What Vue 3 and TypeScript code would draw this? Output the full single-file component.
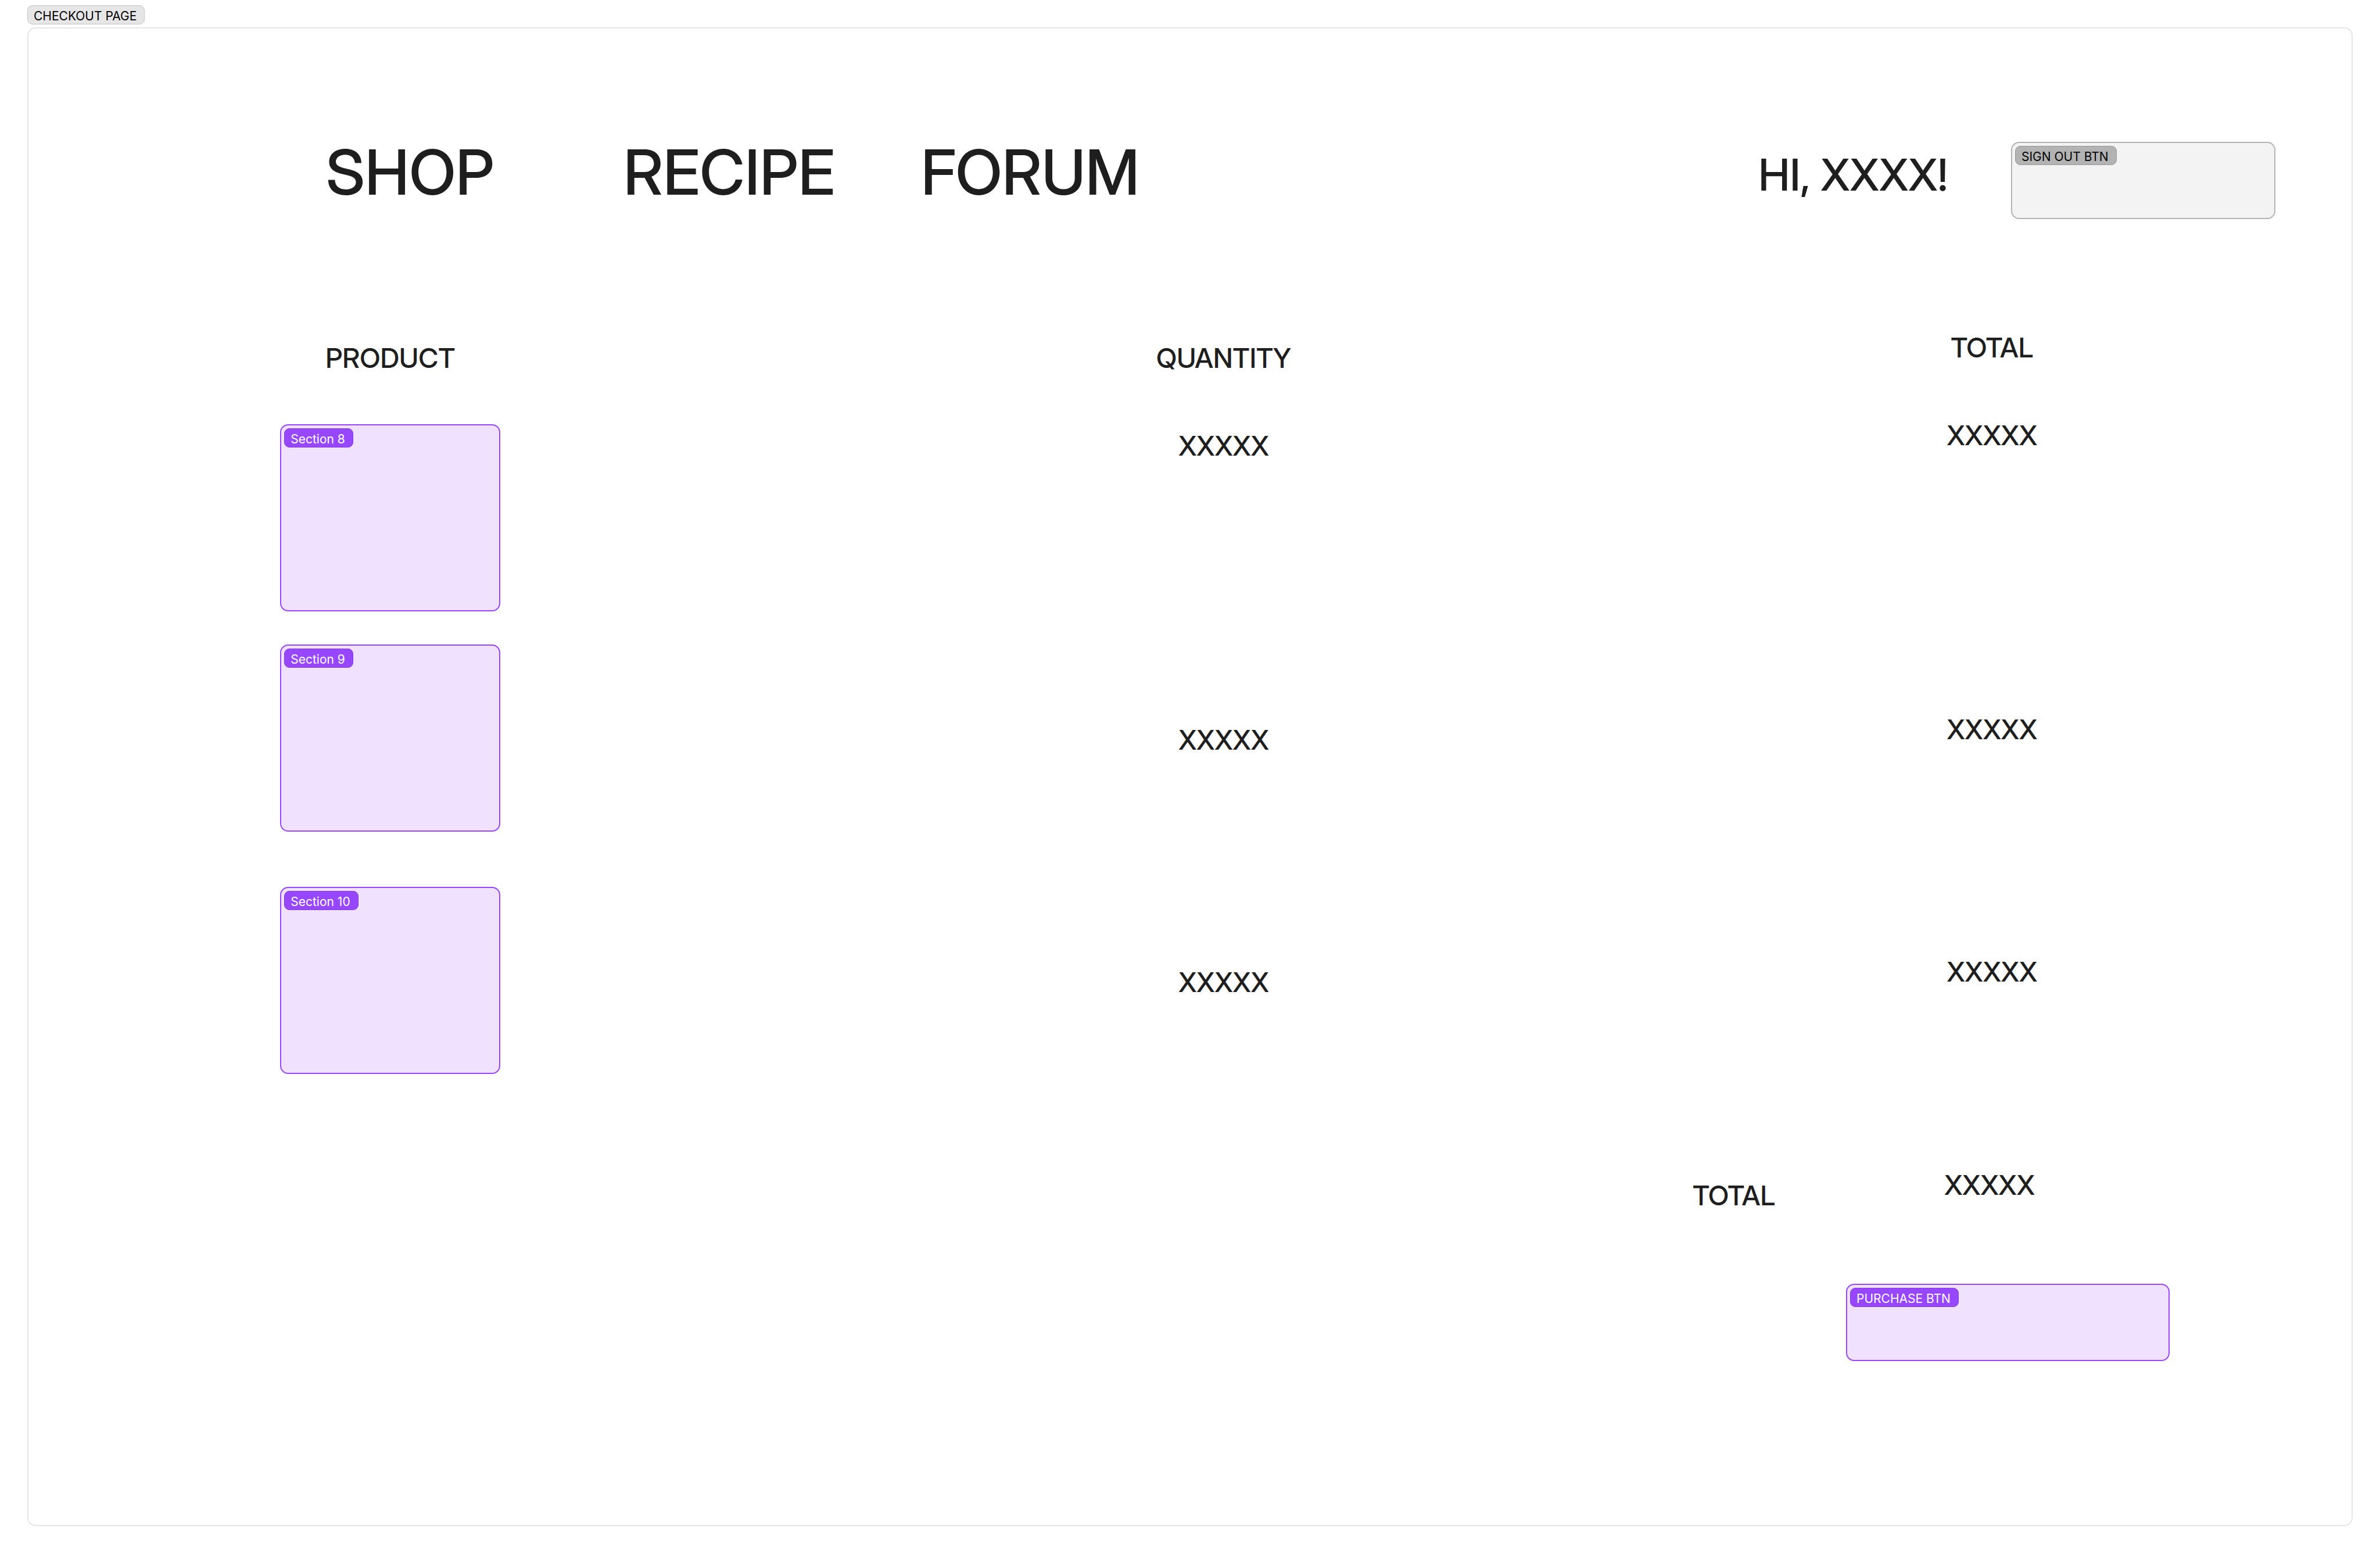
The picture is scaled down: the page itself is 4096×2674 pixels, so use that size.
<script setup lang="ts">
interface Item {
  name: string
  quantity: string
  total: string
  placement: 'high' | 'low'
}

const links: string[] = ['SHOP', 'RECIPE', 'FORUM']

const items: Item[] = [
  { name: 'Section 8', quantity: 'XXXXX', total: 'XXXXX', placement: 'high' },
  { name: 'Section 9', quantity: 'XXXXX', total: 'XXXXX', placement: 'low' },
  { name: 'Section 10', quantity: 'XXXXX', total: 'XXXXX', placement: 'low' },
]
</script>

<template>
  <div class="board">
    <h1 class="tag tag-page">CHECKOUT PAGE</h1>

    <div class="frame">
      <header class="top">
        <nav class="nav">
          <a v-for="link in links" :key="link" href="#" class="nav-link">{{ link }}</a>
        </nav>
        <p class="greeting">HI, XXXX!</p>
        <button type="button" class="box box-grey sign-out">
          <span class="tag tag-grey">SIGN OUT BTN</span>
        </button>
      </header>

      <main>
        <table class="cart">
          <colgroup>
            <col class="col-product" />
            <col class="col-quantity" />
            <col class="col-total" />
          </colgroup>
          <thead>
            <tr>
              <th scope="col" class="lowered">PRODUCT</th>
              <th scope="col" class="lowered">QUANTITY</th>
              <th scope="col">TOTAL</th>
            </tr>
          </thead>
          <tbody>
            <tr v-for="item in items" :key="item.name" :class="item.placement">
              <td class="product">
                <div class="box box-purple thumb">
                  <span class="tag tag-purple">{{ item.name }}</span>
                </div>
              </td>
              <td class="lowered"><div class="value">{{ item.quantity }}</div></td>
              <td><div class="value">{{ item.total }}</div></td>
            </tr>
          </tbody>
        </table>

        <dl class="sum">
          <dt class="lowered">TOTAL</dt>
          <dd>XXXXX</dd>
        </dl>

        <div class="actions">
          <button type="button" class="box box-purple purchase">
            <span class="tag tag-purple">PURCHASE BTN</span>
          </button>
        </div>
      </main>
    </div>
  </div>
</template>

<style>
body {
  margin: 0;
  background: #ffffff;
}
</style>

<style scoped>
.board {
  box-sizing: border-box;
  padding: 9px 47px 48px;
  color: #1e1e1e;
  font-family: "Inter Display", Inter, "Liberation Sans", sans-serif;
  font-size: 47px;
  font-weight: 500;
  line-height: 57px;
}

.board *,
.board *::before,
.board *::after {
  box-sizing: border-box;
}

.frame {
  margin-top: 5px;
  padding: 182px 0 282px;
  border: 2px solid #e6e6e6;
  border-radius: 14px;
}

/* Name tags */
.tag {
  display: block;
  width: max-content;
  height: 33px;
  margin: 0;
  padding: 0 13px 0 10px;
  border: 1px solid;
  border-radius: 9px;
  font-family: Inter, "Liberation Sans", sans-serif;
  font-size: 21px;
  font-weight: 400;
  line-height: 36px;
}

.tag-page {
  background: #e6e6e6;
  border-color: #c4c4c4;
  color: #000000;
}

.tag-grey {
  background: #b3b3b3;
  border-color: #989898;
  color: #000000;
}

.tag-purple {
  background: #9747ff;
  border-color: #803cd9;
  color: #ffffff;
}

/* Boxes with a tag in their corner */
.box {
  display: flex;
  align-items: flex-start;
  justify-content: flex-start;
  margin: 0;
  padding: 5px;
  border: 2px solid;
  border-radius: 14px;
  font: inherit;
  text-align: left;
}

.box-grey {
  background: #f3f3f3;
  border-color: #b3b3b3;
}

.box-purple {
  background: #f0e2ff;
  border-color: #9747ff;
}

/* Header */
.top {
  display: flex;
  align-items: flex-start;
  padding: 0 131px 0 512px;
}

.nav {
  display: flex;
}

.nav-link {
  width: 512px;
  color: inherit;
  font-size: 107px;
  line-height: 130px;
  text-decoration: none;
}

.greeting {
  margin: 23px 109px 0 auto;
  font-size: 76px;
  line-height: 92px;
}

.sign-out {
  width: 455px;
  height: 133px;
  margin-top: 13px;
}

/* Cart table */
.cart {
  width: calc(100% - 108px);
  margin-top: 192px;
  border-collapse: collapse;
  table-layout: fixed;
  font: inherit;
  text-align: center;
}

.col-product {
  width: 32.02%;
}

.col-quantity {
  width: 41.72%;
}

.col-total {
  width: 26.26%;
}

.cart th,
.cart td {
  padding: 0;
  font-weight: 500;
  vertical-align: top;
}

.cart thead tr {
  height: 151px;
}

.cart .lowered,
.sum .lowered {
  padding-top: 18px;
}

.cart .product {
  padding-top: 10px;
}

.thumb {
  width: 379px;
  height: 322px;
  margin: 0 auto;
}

.high .thumb {
  margin-bottom: 47px;
}

.low .thumb {
  margin-bottom: 85px;
}

.low .value {
  margin-top: 127px;
}

/* Order total */
.sum {
  display: flex;
  justify-content: flex-end;
  gap: 276px;
  margin: 77px 541px 0 0;
  text-align: center;
}

.sum dt,
.sum dd {
  width: 164px;
  margin: 0;
}

.actions {
  display: flex;
  justify-content: flex-end;
  margin-top: 124px;
  padding-right: 313px;
}

.purchase {
  width: 557px;
  height: 133px;
}
</style>
